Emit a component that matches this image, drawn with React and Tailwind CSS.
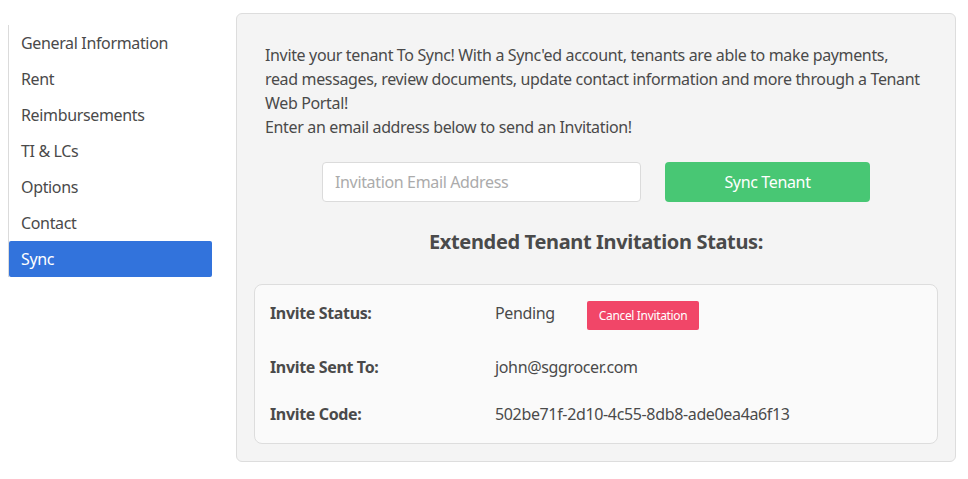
import React from 'react';

const navItems = ['General Information', 'Rent', 'Reimbursements', 'TI & LCs', 'Options', 'Contact', 'Sync'];

const App = () => {
  return (
    <div className="min-h-screen bg-white text-[#4a4a4a] text-[16px] tracking-[-0.35px]" style={{ fontFamily: '"Noto Sans", sans-serif' }}>
      <div className="flex items-start pl-2 pt-[13px]">
        <ul className="w-[204px] mt-[12px] border-l border-[#dbdbdb]">
          {navItems.map((item) => (
            <li
              key={item}
              className={
                item === 'Sync'
                  ? 'h-9 flex items-center pl-3 bg-[#3273dc] text-white rounded-[2px]'
                  : 'h-9 flex items-center pl-3'
              }
            >
              {item}
            </li>
          ))}
        </ul>

        <div className="ml-6 w-[720px] bg-[#f4f4f4] border border-[#dddddd] rounded-md px-[28px] pt-[29px] pb-[17px]">
          <p className="leading-6 pr-1">
            Invite your tenant To Sync! With a Sync'ed account, tenants are able to make payments, read messages, review documents, update contact information and more through a Tenant Web Portal!
            <br />
            Enter an email address below to send an Invitation!
          </p>

          <div className="flex justify-center gap-6 mt-[23px]">
            <input
              type="text"
              placeholder="Invitation Email Address"
              className="w-[319px] h-10 px-3 bg-white border border-[#dbdbdb] rounded-[4px] placeholder:text-[#ababab] outline-none"
            />
            <button className="w-[205px] h-10 bg-[#48c774] text-white rounded-[4px]">Sync Tenant</button>
          </div>

          <h3 className="text-center font-bold text-[20px] leading-[28px] mt-[26px]">Extended Tenant Invitation Status:</h3>

          <div className="-mx-[11px] mt-[28px] bg-[#fafafa] border border-[#dddddd] rounded-lg px-[15px] pt-[16px] pb-[17px]">
            <div className="flex items-start h-[29px]">
              <div className="w-[225px] font-bold leading-6">Invite Status:</div>
              <div className="leading-6">Pending</div>
              <button className="ml-[32px] h-[29px] px-3 bg-[#f14668] text-white text-[12px] rounded-[2px]">Cancel Invitation</button>
            </div>
            <div className="flex mt-[25px] leading-6">
              <div className="w-[225px] font-bold">Invite Sent To:</div>
              <div>john@sggrocer.com</div>
            </div>
            <div className="flex mt-[23px] leading-6">
              <div className="w-[225px] font-bold">Invite Code:</div>
              <div>502be71f-2d10-4c55-8db8-ade0ea4a6f13</div>
            </div>
          </div>
        </div>
      </div>
    </div>
  );
};

export default App;
